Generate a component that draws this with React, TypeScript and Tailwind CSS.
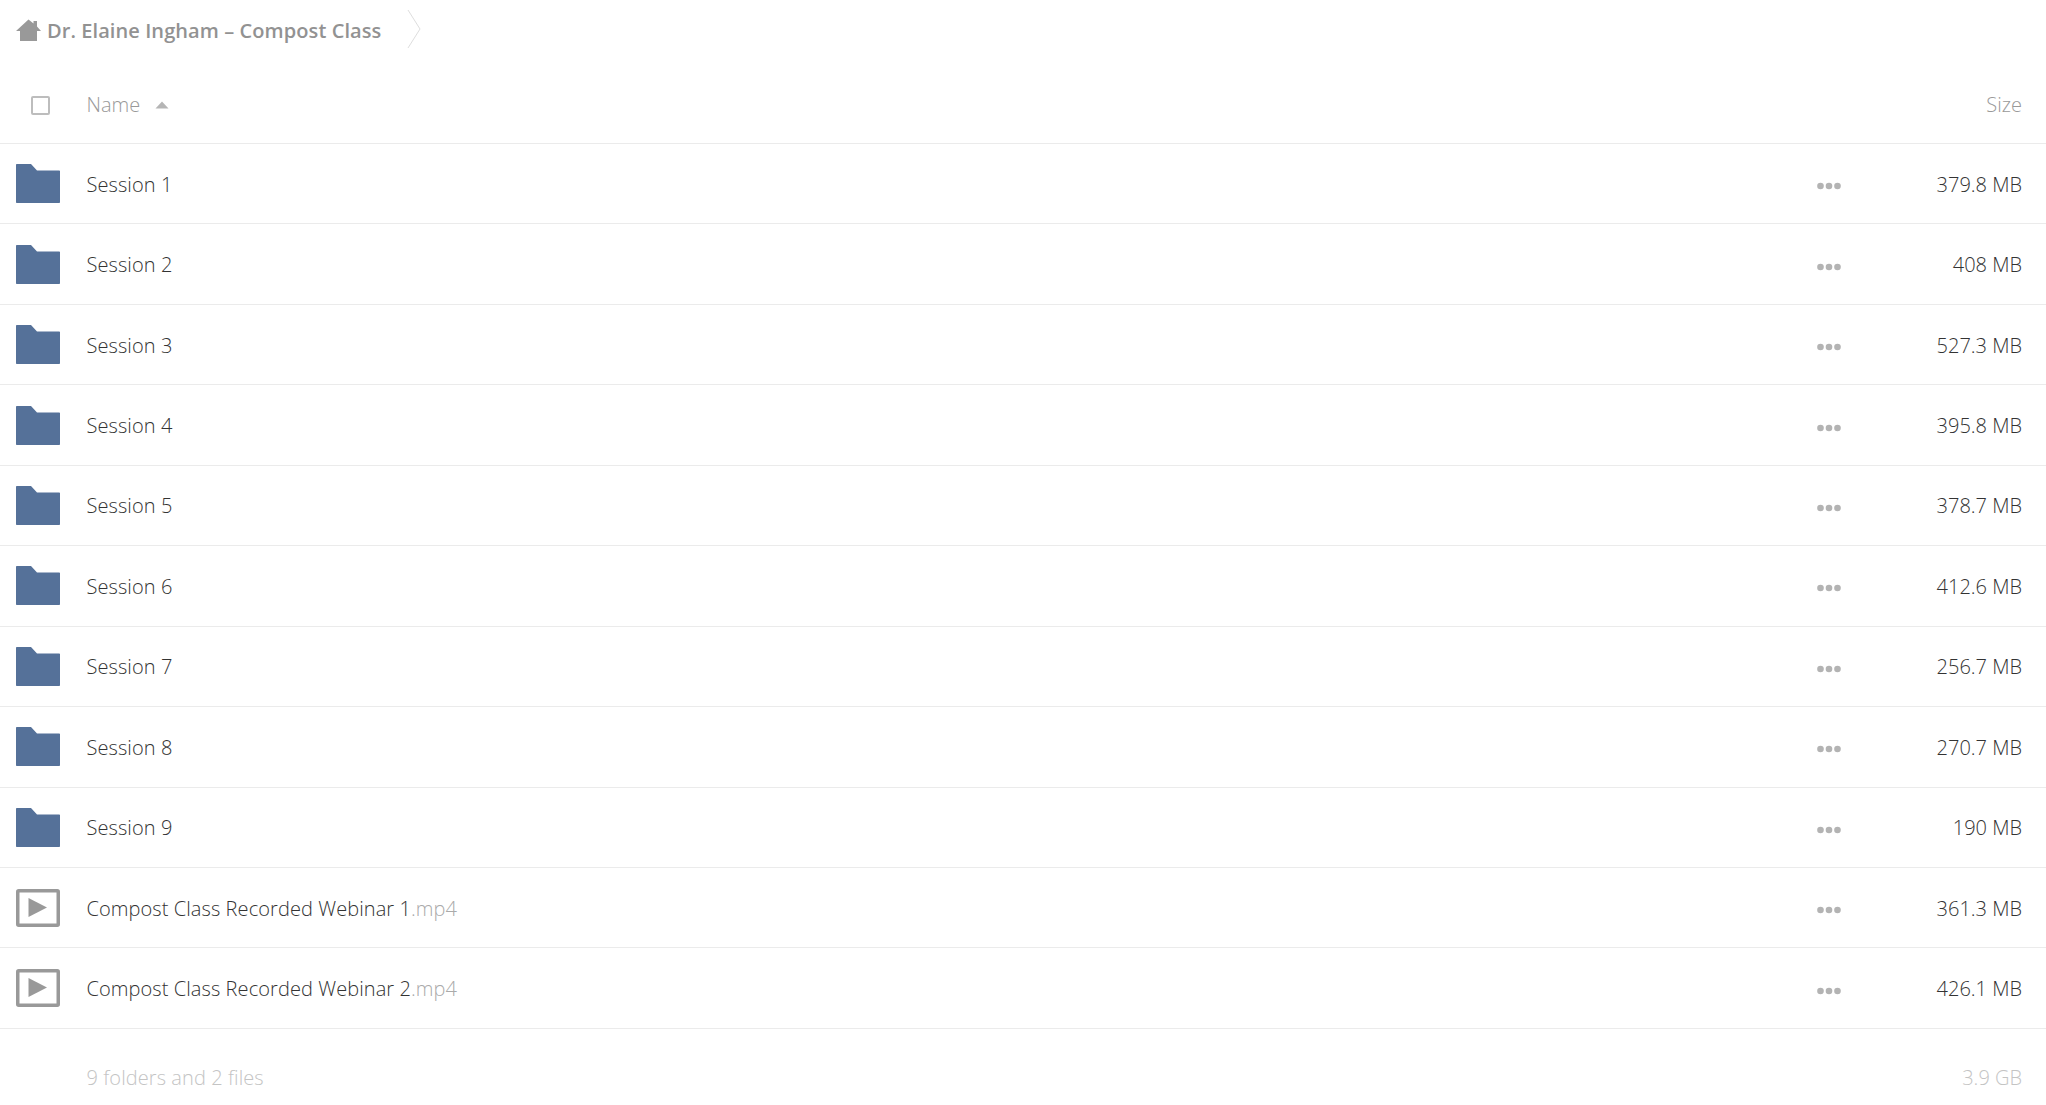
const rows = [
  ["Session 1", "", "379.8 MB"],
  ["Session 2", "", "408 MB"],
  ["Session 3", "", "527.3 MB"],
  ["Session 4", "", "395.8 MB"],
  ["Session 5", "", "378.7 MB"],
  ["Session 6", "", "412.6 MB"],
  ["Session 7", "", "256.7 MB"],
  ["Session 8", "", "270.7 MB"],
  ["Session 9", "", "190 MB"],
  ["Compost Class Recorded Webinar 1", ".mp4", "361.3 MB"],
  ["Compost Class Recorded Webinar 2", ".mp4", "426.1 MB"],
];

function Folder() {
  return (
    <svg width="44" height="39" viewBox="0 0 44 39" className="block">
      <path d="M1 0H15L21 6.500H43C43.600 6.500 44 6.900 44 7.500V38C44 38.600 43.600 39 43 39H1C0.400 39 0 38.600 0 38V1C0 0.400 0.400 0 1 0Z" fill="#557199" />
    </svg>
  );
}

function Video() {
  return (
    <svg width="44" height="38" viewBox="0 0 44 38" className="block">
      <rect x="1.750" y="1.750" width="40.500" height="34.500" rx="1" fill="none" stroke="#999999" strokeWidth="3.500" />
      <path d="M12.500 9V28L31 18.500Z" fill="#999999" />
    </svg>
  );
}

function Dots() {
  return (
    <svg width="24" height="8" viewBox="0 0 24 8" className="block mt-[5px]">
      <circle cx="3.500" cy="4" r="3.300" fill="#b3b3b3" />
      <circle cx="12" cy="4" r="3.300" fill="#b3b3b3" />
      <circle cx="20.500" cy="4" r="3.300" fill="#b3b3b3" />
    </svg>
  );
}

export default function App() {
  return (
    <div className="w-[2046px] h-[1105px] overflow-hidden bg-white font-['Open_Sans',sans-serif] font-light text-[20px] text-[#222]">
      <div className="h-[62px] flex items-center pl-4">
        <svg width="25" height="23" viewBox="0 0 25 23" className="block mr-[6px] mt-[-2px]">
          <path d="M12.500 0.500L17.500 4.500V2H21V7.500L25 12H21V22H4V12H0Z" fill="#999999" />
        </svg>
        <span className="font-semibold text-[#929292] text-[20px] leading-none whitespace-nowrap tracking-[0.08px]">Dr. Elaine Ingham – Compost Class</span>
        <svg width="14" height="40" viewBox="0 0 14 40" className="block ml-[26px] mt-[-4px]">
          <path d="M1 1L13 20L1 39" fill="none" stroke="#dedede" strokeWidth="1" />
        </svg>
      </div>
      <div className="h-[82px] pt-[5px] flex items-center border-b border-[#ebebeb]">
        <div className="w-[86.500px] pl-[31px] shrink-0">
          <div className="w-[19px] h-[19px] border-2 border-[#bdbdbd] rounded-[2px]" />
        </div>
        <span className="text-[#999]">Name</span>
        <svg width="14" height="8" viewBox="0 0 14 8" className="block ml-[15px]">
          <path d="M7 0.500L13.500 7.500H0.500Z" fill="#b5b5b5" />
        </svg>
        <span className="ml-auto pr-6 text-[#999]">Size</span>
      </div>
      {rows.map(([name, ext, size], i) => (
        <div key={name} className="h-[80.450px] flex items-center border-b border-[#ebebeb]">
          <div className="w-[86.500px] pl-4 shrink-0">{i < 9 ? <Folder /> : <Video />}</div>
          <span className="pt-[2px] whitespace-nowrap text-[#333] tracking-[0.08px]">
            {name}
            <span className="text-[#aaa]">{ext}</span>
          </span>
          <div className="ml-auto flex items-center">
            <Dots />
            <span className="w-[205px] pt-[2px] pr-6 text-right whitespace-nowrap text-[#333]">{size}</span>
          </div>
        </div>
      ))}
      <div className="h-[76px] pt-[23px] flex items-center">
        <span className="pl-[86.500px] text-[#c4c4c4] tracking-[0.08px]">9 folders and 2 files</span>
        <span className="ml-auto pr-6 text-[#c4c4c4]">3.9 GB</span>
      </div>
    </div>
  );
}
